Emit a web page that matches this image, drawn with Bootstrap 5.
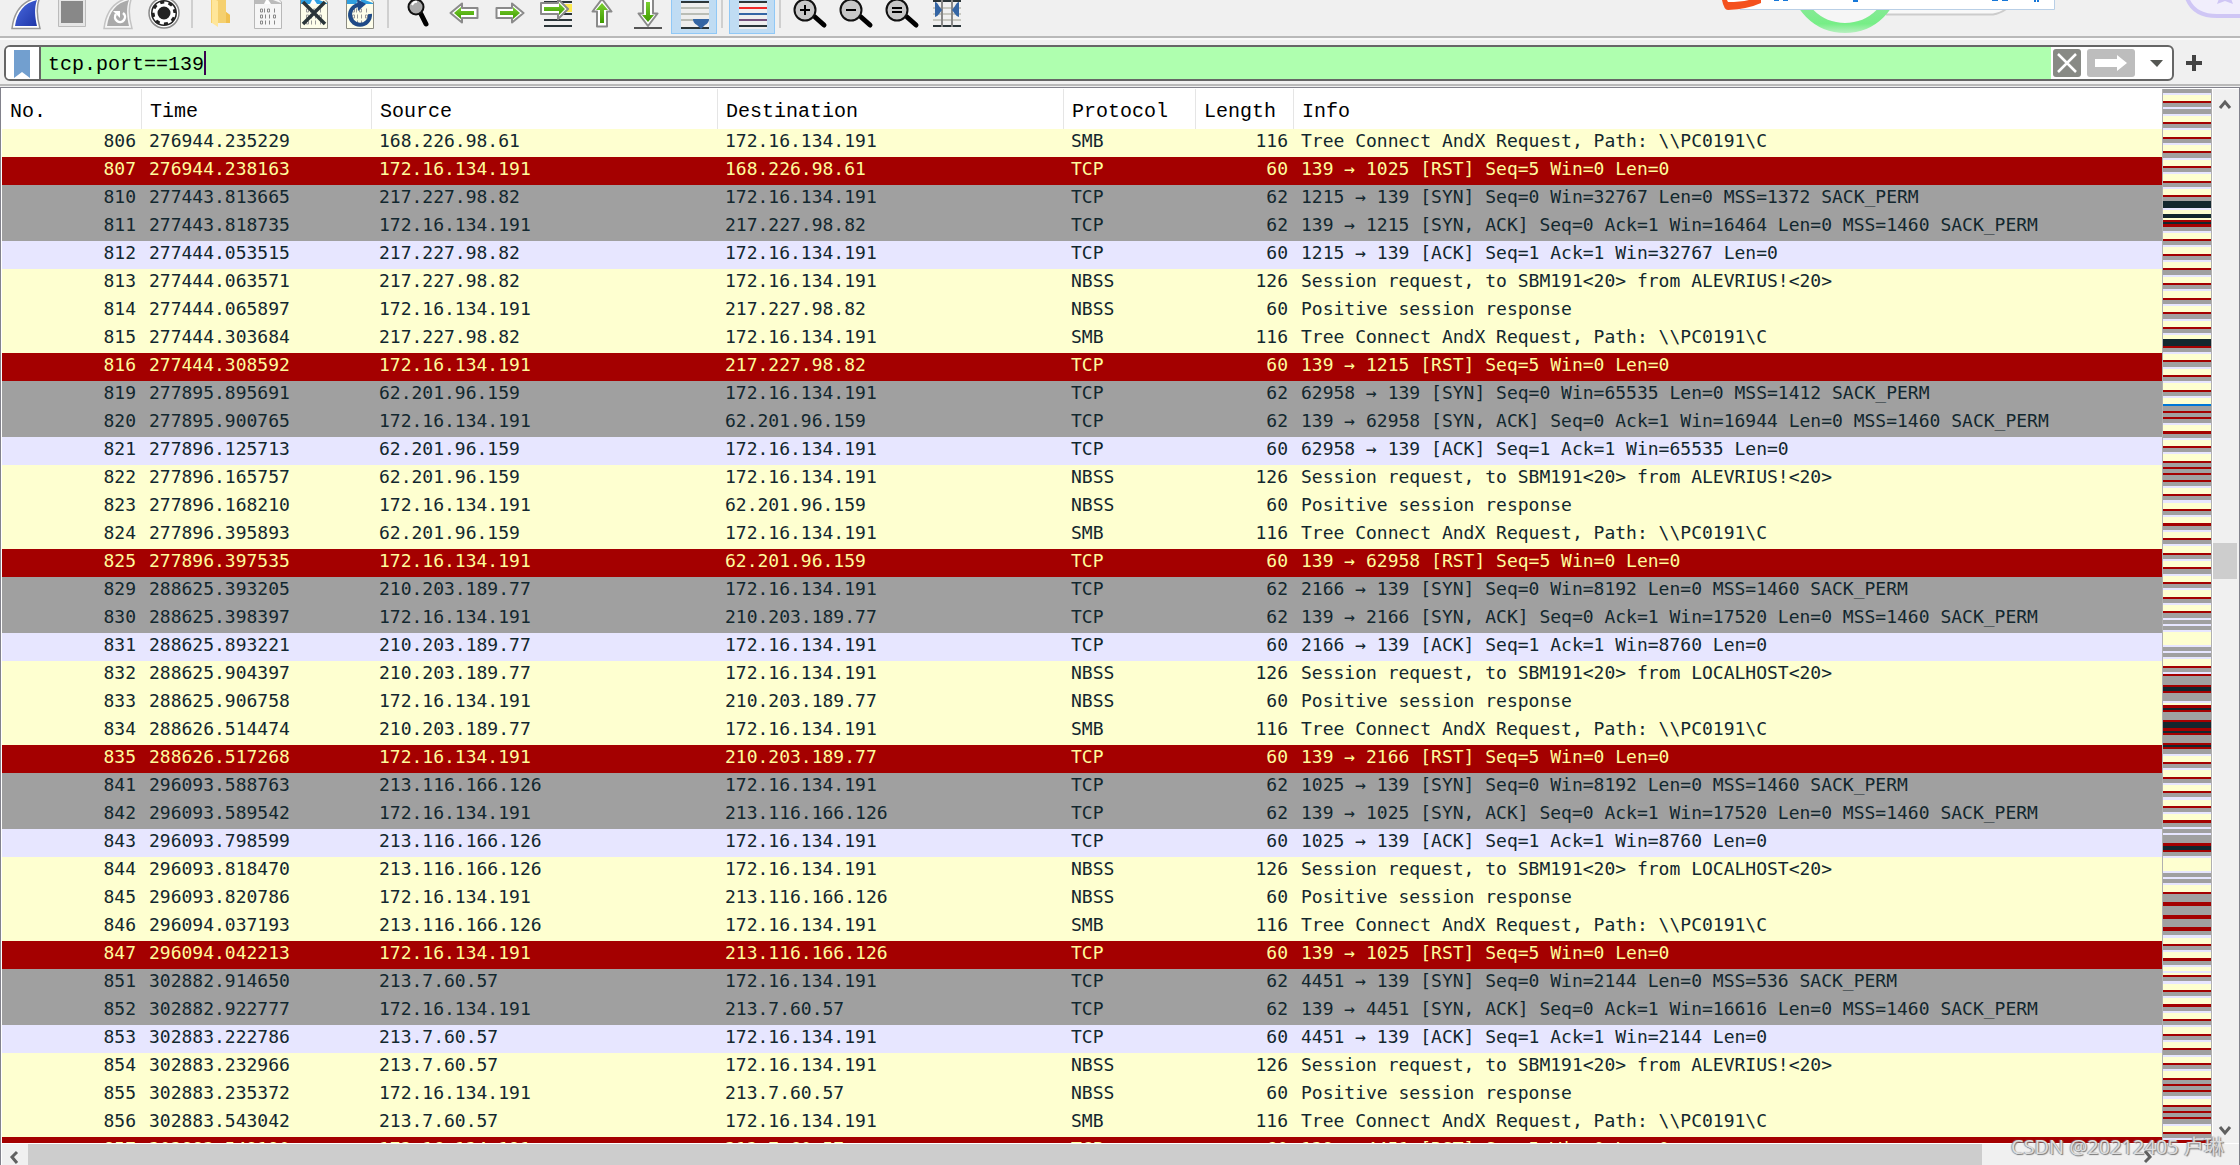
<!DOCTYPE html>
<html lang="en">
<head>
<meta charset="utf-8">
<meta name="viewport" content="width=device-width, initial-scale=1">
<title>Packet list</title>
<link href="https://cdn.jsdelivr.net/npm/bootstrap@5.3.0/dist/css/bootstrap.min.css" rel="stylesheet">
<script src="https://cdn.jsdelivr.net/npm/bootstrap@5.3.0/dist/js/bootstrap.bundle.min.js"></script>
<style>
body { background: #f0f0f0; font-family: "Liberation Mono", monospace; color: #000; }
.main-toolbar { height: 40px; padding-left: 3px; border-bottom: 2px solid #fafafa; }
.main-toolbar::after { content: ""; position: absolute; left: 0; right: 0; bottom: 0; height: 2px; background: #b9b9b9; }
.tool { width: 46px; height: 34px; padding: 0; border: 0; background: none; flex: none; }
.tool.on { background: #c0dcf3; box-shadow: inset 1px 0 #90c8f6, inset -1px -1px #90c8f6; }
.tool svg, .overlay svg { display: block; }
.tool-sep { width: 12px; height: 28px; flex: none; background: linear-gradient(#cfcfcf, #cfcfcf) 4px 0 / 2px 100% no-repeat; }
.overlay { top: 0; right: 0; }
.filter-bar { height: 46px; padding: 5px 36px 4px 4px; border-bottom: 2px solid #b9b9b9; gap: 10px; }
.filter-box { border: 2px solid #666; border-radius: 6px; background: #fff; height: 36px; overflow: hidden; }
.mark-btn { width: 35px; border: 0; border-right: 2px solid #666; background: #fff; padding: 0 0 0 6px; }
.filter-input { border: 0; background: linear-gradient(#3c0050, #3c0050) 163px 4px / 2px 24px no-repeat #afffaf; caret-color: transparent; padding: 4px 7px 0; font-size: 20px; min-width: 0; outline: 0; color: #000; }
.plain-btn { border: 0; background: none; padding: 0; line-height: 0; }
.list-frame { border: 1px solid #82828c; border-bottom: 0; margin-top: 1px; background: #fff; padding: 1px 0 0 1px; }
.packets { table-layout: fixed; width: 100%; border-collapse: separate; border-spacing: 0; }
.packets th { height: 40px; font-weight: 400; font-size: 20px; line-height: 24px; padding: 6px 0 0 8px; border-right: 1px solid #e5e5e5; }
.packets th:last-child { border-right: 0; }
.packets td { height: 28px; padding: 0 0 4px 7px; font: 18px/24px "DejaVu Sans Mono", monospace; white-space: pre; overflow: hidden; }
.packets td.num { text-align: right; padding-right: 6px; }
.r-smb { background: #feffd0; color: #12272e; }
.r-rst { background: #a40000; color: #fffc9c; }
.r-syn { background: #a0a0a0; color: #12272e; }
.r-tcp { background: #e7e6ff; color: #12272e; }
.minimap { width: 50px; border: solid #b0b0b0; border-width: 0 1px; flex: none; }
.vbar { width: 27px; background: #f0f0f0; border-left: 1px solid #fff; flex: none; }
.vthumb { height: 36px; width: 24px; background: #cdcdcd; }
.hbar { height: 22px; border-top: 1px solid #fff; background: #f0f0f0; }
.hthumb { background: #cdcdcd; flex: 1954 0 0; }
.hrest { flex: 153 0 0; }
.caption-mark { right: 16px; bottom: 4px; font: 20px/28px "Open Sans", "Noto Sans CJK SC", sans-serif; color: #ddd; text-shadow: 1px 1px 1px #777, -1px 0 1px #999; }
</style>
</head>
<body class="vh-100 overflow-hidden d-flex flex-column position-relative">

<svg width="0" height="0" class="position-absolute" aria-hidden="true">
  <defs>
    <linearGradient id="gBlue" x1="0" y1="0" x2="1" y2="1"><stop offset="0" stop-color="#4a6be0"/><stop offset="1" stop-color="#1f36a8"/></linearGradient>
    <linearGradient id="gGreen" x1="0" y1="0" x2="0" y2="1"><stop offset="0" stop-color="#7ad030"/><stop offset="1" stop-color="#3f9a00"/></linearGradient>
    <linearGradient id="gRing" gradientUnits="userSpaceOnUse" x1="0" y1="10" x2="0" y2="33"><stop offset="0" stop-color="#84ea94"/><stop offset=".6" stop-color="#76ee86"/><stop offset="1" stop-color="#b8efc0"/></linearGradient>
    <g id="sheet"><path d="M9.500-6h19l8 8v26.500h-27z" fill="#fdfdea" stroke="#8b8b82"/><path d="M10-6h18v6l8 3v1H10z" fill="#2f9fe0"/><path d="M19 4l3-6 4 6z" fill="#fff"/></g>
    <g id="bits" fill="none" stroke-width="1"><path d="M15.500 9v3h2v-3zM19.500 8.500v4M22.500 9v3h2v-3zM29.500 8.500v4M15.500 15v3h2v-3zM20.500 14.500v4M24.500 14.500v4M28.500 15v3h2v-3zM15.500 21v3h2v-3zM20.500 20.500v4M24.500 20.500v4M29.500 20.500v4"/></g>
    <g id="lens"><path d="M30 17l9 8" stroke="#000" stroke-width="5" stroke-linecap="round"/><circle cx="20" cy="10" r="10.500" fill="#c8c8c8" stroke="#111" stroke-width="2"/></g>
  </defs>
</svg>

<div class="main-toolbar d-flex align-items-start position-relative flex-shrink-0" role="toolbar" aria-label="Main toolbar">
  <button class="tool" aria-label="Start capture"><svg width="46" height="34"><path d="M9 28.500C11 11 20 0 37-3c-4 9-3 21 0 31.500z" fill="#fff" stroke="#999" stroke-width="1.500"/><path d="M12 26C14 12 21 3 34 0c-3 8-2 17 0 26z" fill="url(#gBlue)"/></svg></button>
  <button class="tool" aria-label="Stop capture"><svg width="46" height="34"><path d="M9.500-2h27v28.500h-27z" fill="#e6e6e6" stroke="#bbb"/><path d="M12 1h22v22H12z" fill="#888"/></svg></button>
  <button class="tool" aria-label="Restart capture"><svg width="46" height="34"><path d="M9 28.500C11 11 20 0 37-3c-4 9-3 21 0 31.500z" fill="#f6f6f6" stroke="#c4c4c4" stroke-width="1.500"/><path d="M12 26C14 12 21 3 34 0c-3 8-2 17 0 26z" fill="#aaa"/><path d="M28 13a5 5 0 1 1-7 1" fill="none" stroke="#fff" stroke-width="2.500"/><path d="M18 11h7v7z" fill="#fff"/></svg></button>
  <button class="tool" aria-label="Capture options"><svg width="46" height="34"><circle cx="23" cy="13" r="15" fill="#fff" stroke="#8a8a8a" stroke-width="1.500"/><circle cx="23" cy="13" r="13" fill="#222"/><circle cx="23" cy="13" r="8" fill="none" stroke="#fff" stroke-width="3"/><circle cx="23" cy="13" r="10" fill="none" stroke="#fff" stroke-width="3" stroke-dasharray="4 3.850"/></svg></button>
  <span class="tool-sep"></span>
  <button class="tool" aria-label="Open file"><svg width="46" height="34"><path d="M12-2h15v14l4 3v8H12z" fill="#f5d06f"/><path d="M13-2l6 3v26l-6-4z" fill="#ffe69a"/><path d="M27 12l4 3v8h-4z" fill="#f0c050"/></svg></button>
  <button class="tool" aria-label="Save file"><svg width="46" height="34"><path d="M9.500-6h19l8 8v26.500h-27z" fill="#f6f6f6" stroke="#b8b8b8"/><path d="M10-6h18v6l8 3v1H10z" fill="#bbb"/><path d="M19 4l3-6 4 6z" fill="#fff"/><use href="#bits" stroke="#888"/></svg></button>
  <button class="tool" aria-label="Close file"><svg width="46" height="34"><use href="#sheet"/><use href="#bits" stroke="#999"/><path d="M12 2l22 22M34 2L12 24" stroke="#2b3539" stroke-width="3.500"/></svg></button>
  <button class="tool" aria-label="Reload file"><svg width="46" height="34"><use href="#sheet"/><use href="#bits" stroke="#999"/><path d="M33 14a10 10 0 1 1-8-9" fill="none" stroke="#1f4a87" stroke-width="4"/><path d="M20-1l9 5-8 7z" fill="#1f4a87"/></svg></button>
  <span class="tool-sep"></span>
  <button class="tool" aria-label="Find packet"><svg width="46" height="34"><path d="M26 14l5 10" stroke="#000" stroke-width="5" stroke-linecap="round"/><circle cx="21" cy="7" r="7.500" fill="#aaa" stroke="#111" stroke-width="2"/><path d="M17 5q2-4 5-3" stroke="#fff" stroke-width="2" fill="none"/></svg></button>
  <button class="tool" aria-label="Previous packet"><svg width="46" height="34"><path d="M9.500 13L21 3.500V8h15.500v10H21v4.500z" fill="#fff" stroke="#8a8a8a" stroke-width="2" stroke-linejoin="round"/><path d="M13 13l7-6v4h13v4H20v4z" fill="url(#gGreen)"/></svg></button>
  <button class="tool" aria-label="Next packet"><svg width="46" height="34"><path d="M36.500 13L25 3.500V8H9.500v10H25v4.500z" fill="#fff" stroke="#8a8a8a" stroke-width="2" stroke-linejoin="round"/><path d="M33 13l-7-6v4H13v4h13v4z" fill="url(#gGreen)"/></svg></button>
  <button class="tool" aria-label="Go to packet"><svg width="46" height="34"><path d="M27 4h12v8H27z" fill="#fce94f"/><path d="M11 2h28M28 14h11M11 20h28M11 26h28" stroke="#2b3539" stroke-width="2"/><path d="M35 9L25-1v4H8v11h17v5z" fill="#fff" stroke="#8a8a8a" stroke-width="2" stroke-linejoin="round"/><path d="M32 9l-6-6v4H11v4h15v4z" fill="url(#gGreen)"/></svg></button>
  <button class="tool" aria-label="First packet"><svg width="46" height="34"><path d="M23-1l9.500 12.500H28v15H18v-15h-4.500z" fill="#fff" stroke="#8a8a8a" stroke-width="2" stroke-linejoin="round"/><path d="M23 3l6 7h-4v13h-4V10h-4z" fill="url(#gGreen)"/></svg></button>
  <button class="tool" aria-label="Last packet"><svg width="46" height="34"><path d="M9 28h28" stroke="#555" stroke-width="2"/><path d="M23 26l9.500-12.500H28V-3H18v16.500h-4.500z" fill="#fff" stroke="#8a8a8a" stroke-width="2" stroke-linejoin="round"/><path d="M23 22l6-7h-4V2h-4v13h-4z" fill="url(#gGreen)"/></svg></button>
  <button class="tool on" aria-label="Auto scroll"><svg width="46" height="34"><path d="M10 1h28v28H10z" fill="#eee"/><path d="M10 2h28M10 28h28" stroke="#2b3539" stroke-width="2"/><path d="M10 8h28M10 14h28M10 20h28" stroke="#babdb6" stroke-width="2"/><path d="M22 19h16q0 4-4 6l-4 4-4-4q-4-2-4-6z" fill="#3465a4"/></svg></button>
  <span class="tool-sep"></span>
  <button class="tool on" aria-label="Colorize"><svg width="46" height="34"><path d="M10 1h28v28H10z" fill="#eee"/><path d="M10 2h28M10 26h28" stroke="#2b3539" stroke-width="2"/><path d="M10 8h28" stroke="#ef2929" stroke-width="2"/><path d="M10 14h28" stroke="#3465a4" stroke-width="2"/><path d="M10 20h28" stroke="#75507b" stroke-width="2"/></svg></button>
  <span class="tool-sep"></span>
  <button class="tool" aria-label="Zoom in"><svg width="46" height="34"><use href="#lens" x="-2"/><path d="M13 10h10M18 5v10" stroke="#000" stroke-width="2"/></svg></button>
  <button class="tool" aria-label="Zoom out"><svg width="46" height="34"><use href="#lens" x="-2"/><path d="M13 10h10" stroke="#000" stroke-width="2"/></svg></button>
  <button class="tool" aria-label="Normal size"><svg width="46" height="34"><use href="#lens" x="-2"/><path d="M13 8h10M13 12h10" stroke="#000" stroke-width="2"/></svg></button>
  <button class="tool" aria-label="Resize columns"><svg width="46" height="34"><path d="M8 8h28M8 14h28M8 20h28" stroke="#c8c8c0" stroke-width="2"/><path d="M8 1h28M8 26h28" stroke="#2b3539" stroke-width="2"/><path d="M17 0v27M27 0v27" stroke="#888" stroke-width="2"/><path d="M10 2q2 0 4 4l3 4-3 4q-2 3-4 3zM34 2q-2 0-4 4l-3 4 3 4q2 3 4 3z" fill="#3465a4"/></svg></button>
</div>

<div class="overlay position-absolute" aria-hidden="true">
  <svg width="540" height="34">
    <path d="M180-5h142l-14 11q-10 9-16 9H180z" fill="#f8f8f8"/><path d="M186 14.500h107q7-1 14-6" fill="none" stroke="#ccc" stroke-width="2"/>
    <circle cx="145" cy="-22" r="45" fill="#f6f6f6"/><circle cx="145" cy="-22" r="50" fill="none" stroke="url(#gRing)" stroke-width="10"/>
    <path d="M40-5h314.500V9.500H40z" fill="#fff" stroke="#b9cfe6"/>
    <path d="M22 0h39v3Q48 9 28 10q-4 0-6-10z" fill="#f4511e"/><path d="M27 0h22q-9 2-21 2z" fill="#fff"/>
    <path d="M74 0h5v1h-5zM83 0h5v1h-5zM153 0h5v2h-5zM292 0h6v1h-6zM302 0h6v1h-6zM334 0h2v2h-2zM337 0h2v2h-2z" fill="#1677d8"/>
    <path d="M485-10h70v26h-38q-28 0-32-26z" fill="#f1eefc" stroke="#cfc6f5" stroke-width="4"/><path d="M517 4l3-8h10l3 8-8-3z" fill="#cfc6f5"/>
  </svg>
</div>

<form class="filter-bar d-flex align-items-center flex-shrink-0" onsubmit="return false">
  <div class="filter-box d-flex flex-grow-1">
    <button class="mark-btn flex-shrink-0" type="button" aria-label="Filter bookmarks"><svg width="20" height="30" class="d-block"><path d="M2 2h16v28l-8-6-8 6z" fill="#729fcf"/></svg></button>
    <input class="filter-input flex-grow-1" type="text" value="tcp.port==139" aria-label="Display filter" autofocus spellcheck="false">
    <button class="plain-btn" type="button" aria-label="Clear filter"><svg width="32" height="32"><rect x="2" y="2" width="28" height="28" rx="3" fill="#888a85"/><path d="M7 7l18 18M25 7L7 25" stroke="#fff" stroke-width="2.500"/></svg></button>
    <button class="plain-btn" type="submit" aria-label="Apply filter"><svg width="52" height="32"><rect x="4" y="2" width="48" height="28" rx="3" fill="#bdbdbd"/><path d="M12 12h22V8l10 8-10 8v-4H12z" fill="#fff"/></svg></button>
    <button class="plain-btn" type="button" aria-label="Recent filters"><svg width="37" height="32"><path d="M15 13h13l-6 7z" fill="#555753"/></svg></button>
  </div>
  <button class="plain-btn" type="button" aria-label="Add filter button"><svg width="20" height="20"><path d="M2 10h16M10 2v16" stroke="#444" stroke-width="4"/></svg></button>
</form>

<main class="list-frame d-flex flex-column flex-grow-1 overflow-hidden">
  <div class="d-flex flex-grow-1 overflow-hidden">
    <div class="flex-grow-1 overflow-hidden">
      <table class="packets">
        <colgroup><col style="width:140px"><col style="width:230px"><col style="width:346px"><col style="width:346px"><col style="width:132px"><col style="width:98px"><col></colgroup>
        <thead><tr><th>No.</th><th>Time</th><th>Source</th><th>Destination</th><th>Protocol</th><th>Length</th><th>Info</th></tr></thead>
        <tbody id="rows"></tbody>
      </table>
    </div>
    <div class="minimap overflow-hidden" id="minimap"></div>
    <div class="vbar d-flex flex-column">
      <button class="plain-btn text-start" aria-label="Scroll up"><svg width="24" height="28"><path d="M7 19l5-6 5 6" fill="none" stroke="#606060" stroke-width="3"/></svg></button>
      <div style="flex:426 0 0"></div><div class="vthumb"></div><div style="flex:537 0 0"></div>
      <button class="plain-btn text-start" aria-label="Scroll down"><svg width="24" height="28"><path d="M7 12l5 6 5-6" fill="none" stroke="#606060" stroke-width="3"/></svg></button>
    </div>
  </div>
  <div class="hbar d-flex flex-shrink-0">
    <button class="plain-btn" aria-label="Scroll left"><svg width="26" height="21"><path d="M15 8l-5 5 5 6" fill="none" stroke="#606060" stroke-width="3"/></svg></button>
    <div class="hthumb"></div><div class="hrest"></div>
    <button class="plain-btn" aria-label="Scroll right"><svg width="104" height="21"><path d="M10 7l5 6-5 5" fill="none" stroke="#606060" stroke-width="3"/></svg></button>
  </div>
</main>
<div class="caption-mark position-absolute">CSDN @20212405 卢琳</div>

<script>
// Each conversation: client address, client port, SYN window and MSS, SYN-ACK window, host name, then [frame, time] pairs.
const home = '172.16.134.191';
const flows = [
  ['168.226.98.61', 1025, 0, 0, 0, 'ALEVRIUS!', [0, 0, 0, 0, 0, [806, '276944.235229'], [807, '276944.238163']]],
  ['217.227.98.82', 1215, 32767, 1372, 16464, 'SBM191<20> from ALEVRIUS!<20>', [[810, '277443.813665'], [811, '277443.818735'], [812, '277444.053515'], [813, '277444.063571'], [814, '277444.065897'], [815, '277444.303684'], [816, '277444.308592']]],
  ['62.201.96.159', 62958, 65535, 1412, 16944, 'SBM191<20> from ALEVRIUS!<20>', [[819, '277895.895691'], [820, '277895.900765'], [821, '277896.125713'], [822, '277896.165757'], [823, '277896.168210'], [824, '277896.395893'], [825, '277896.397535']]],
  ['210.203.189.77', 2166, 8192, 1460, 17520, 'SBM191<20> from LOCALHOST<20>', [[829, '288625.393205'], [830, '288625.398397'], [831, '288625.893221'], [832, '288625.904397'], [833, '288625.906758'], [834, '288626.514474'], [835, '288626.517268']], 8760],
  ['213.116.166.126', 1025, 8192, 1460, 17520, 'SBM191<20> from LOCALHOST<20>', [[841, '296093.588763'], [842, '296093.589542'], [843, '296093.798599'], [844, '296093.818470'], [845, '296093.820786'], [846, '296094.037193'], [847, '296094.042213']], 8760],
  ['213.7.60.57', 4451, 2144, 536, 16616, 'SBM191<20> from ALEVRIUS!<20>', [[851, '302882.914650'], [852, '302882.922777'], [853, '302883.222786'], [854, '302883.232966'], [855, '302883.235372'], [856, '302883.543042'], [857, '302883.549190']]]
];
const body = document.getElementById('rows');
for (const [peer, port, win, mss, ackWin, names, frames, ackedWin] of flows) {
  const steps = [
    ['r-syn', 'TCP', 62, false, `${port} → 139 [SYN] Seq=0 Win=${win} Len=0 MSS=${mss} SACK_PERM`],
    ['r-syn', 'TCP', 62, true, `139 → ${port} [SYN, ACK] Seq=0 Ack=1 Win=${ackWin} Len=0 MSS=1460 SACK_PERM`],
    ['r-tcp', 'TCP', 60, false, `${port} → 139 [ACK] Seq=1 Ack=1 Win=${ackedWin || win} Len=0`],
    ['r-smb', 'NBSS', 126, false, `Session request, to ${names}`],
    ['r-smb', 'NBSS', 60, true, 'Positive session response'],
    ['r-smb', 'SMB', 116, false, 'Tree Connect AndX Request, Path: \\\\PC0191\\C'],
    ['r-rst', 'TCP', 60, true, `139 → ${port} [RST] Seq=5 Win=0 Len=0`]
  ];
  steps.forEach(([cls, proto, len, fromHome, info], i) => {
    if (!frames[i]) return;
    const tr = body.insertRow();
    tr.className = cls;
    const cells = [frames[i][0], frames[i][1], fromHome ? home : peer, fromHome ? peer : home, proto, len, info];
    cells.forEach((text, c) => {
      const td = tr.insertCell();
      td.textContent = text;
      if (c === 0 || c === 5) td.className = 'num';
    });
  });
}

// Minimap: colour key and the end of each band, three units to a pixel, in sections.
const ink = { G: '#a0a0a0', L: '#e7e6ff', Y: '#feffd0', R: '#a40000', K: '#12272e', B: '#0078d7' };
const sections = [
  [0, 'G39 L45 Y63 R69 G81 L87 G102 L108 Y126 R132 G144 L150 Y171 R177 G189 L195 Y213 R219 G234 L240 Y258 R264 G276 L282 Y303 R309 G321 L327 Y345 R351 G363 K384 L390 Y402 K414 Y420 R426 K432 R441 G453 L459 Y477 R483 G495 L501 Y522 R528 G540 L546 Y564 R570 G585 L591 Y609 R615 G627 L633 Y654 R660 G672 L678 Y696 R702 G717 L723 Y741 R747 G759 L765 Y777 K798 R804 G816 L822 Y840 R846 G861 L867 Y885 R891 G903 L909 Y930 R936 G948 L954 Y972 B978 G993 R999 G1011 R1017 G1029 L1035 Y1053 R1062 G1074 L1080'],
  [1080, 'Y18 R24 G36 L42 Y63 R69 G81 R87 G99 R105 G120 R126 G138 L144 Y162 R168 G180 L189 Y207 R213 G225 L231 Y249 R258 G270 L276 Y294 R300 G312 L318 Y339 R345 G357 L363 Y381 R387 G402 L408 Y426 R432 G444 L450 Y471 R477 G489 L495 Y513 R519 G534 L540 G552 L558 G570 L576 Y615 L621 G633 L639 G651 L657 Y678 R684 G696 L702 R708 G735 R741 K753 R759 G783 L789 Y795 R804 K810 R816 G840 R846 K864 R873 K879 R885 G909 R915 K921 R927 G942 L948 Y966 R972 G984 L990 Y1011 R1017 G1029 L1035 Y1053 R1059 G1071 L1080'],
  [2160, 'Y18 R24 G36 L42 Y60 R69 G81 L87 G99 L105 G129 R138 K150 R156 G168 L174 Y213 L219 G231 L237 G249 L255 Y276 R282 G306 R318 G345 R357 G381 R393 G405 L414 Y432 R438 G450 L456 Y474 R483 G495 L501 Y513 L519 Y525 R531 G543 L552 Y570 R576 G588 L594 Y612 R621 G633 L639 Y657 R663 G675 L681 Y702 R708 G720 L726 Y744 R750 G765 L771 Y789 R795 G807 L813 Y834 R840 G852 R858 G870 R876 G888 L897 Y915 R921 G933 R939 G951 R957 G972 L978 Y996 R1002 G1014 L1020 R1029']
];
let last = 27;
for (const [base, bands] of sections) {
  for (const band of bands.split(' ')) {
    const end = base + Number(band.slice(1));
    const div = document.createElement('div');
    div.style.height = Math.round((end - last) / 3) + 'px';
    div.style.background = ink[band[0]];
    document.getElementById('minimap').append(div);
    last = end;
  }
}
const field = document.querySelector('.filter-input');
field.setSelectionRange(field.value.length, field.value.length);
</script>
</body>
</html>
